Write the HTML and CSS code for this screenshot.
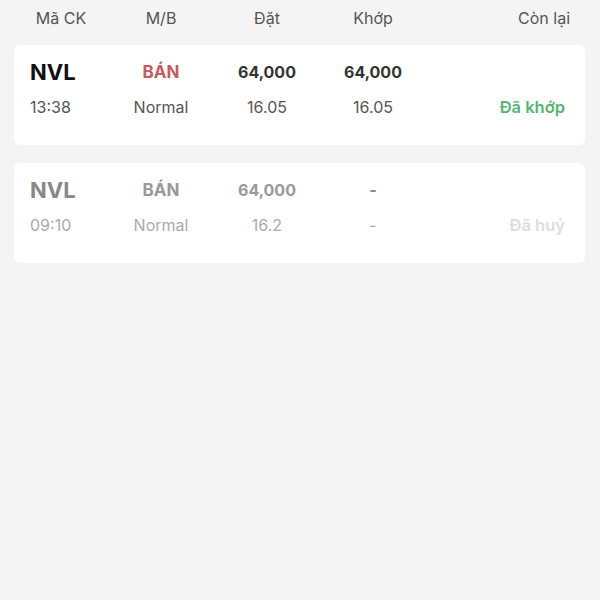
FILE: index.html
```html
<!DOCTYPE html>
<html lang="vi">
<head>
    <meta charset="UTF-8">
    <meta name="viewport" content="width=device-width, initial-scale=1.0">
    <title>Sổ lệnh</title>
    <link rel="stylesheet" href="styles.css">
</head>
<body>

<div class="orders">
    <div class="order-head">
        <span class="col-code">Mã CK</span>
        <span>M/B</span>
        <span>Đặt</span>
        <span>Khớp</span>
        <span class="col-status">Còn lại</span>
    </div>

    <div class="order-card">
        <div class="order-row top">
            <span class="col-code code">NVL</span>
            <span class="side sell">BÁN</span>
            <span class="qty">64,000</span>
            <span class="qty">64,000</span>
            <span class="col-status"></span>
        </div>
        <div class="order-row">
            <span class="col-code">13:38</span>
            <span>Normal</span>
            <span>16.05</span>
            <span>16.05</span>
            <span class="col-status status matched">Đã khớp</span>
        </div>
    </div>

    <div class="order-card cancelled">
        <div class="order-row top">
            <span class="col-code code">NVL</span>
            <span class="side">BÁN</span>
            <span class="qty">64,000</span>
            <span class="dash">-</span>
            <span class="col-status"></span>
        </div>
        <div class="order-row">
            <span class="col-code">09:10</span>
            <span>Normal</span>
            <span>16.2</span>
            <span>-</span>
            <span class="col-status status">Đã huỷ</span>
        </div>
    </div>
</div>

</body>
</html>
```

FILE: styles.css
```css
body {
    font-family: Inter, 'Noto Sans', sans-serif;
    background-color: #f4f4f4;
    color: #444;
    margin: 0;
    padding: 0;
    height: 100vh;
}
.orders {
    padding: 0 15px 0 14px;
}
.order-head,
.order-row {
    display: grid;
    grid-template-columns: 62px 138px 74px 138px 1fr;
    align-items: center;
    text-align: center;
}
.order-head {
    height: 36px;
    padding: 0 15px 0 16px;
    font-size: 16px;
    color: #555;
}
.order-head .col-code {
    text-align: center;
}
.col-code {
    text-align: left;
}
.col-status {
    text-align: right;
}
.order-card {
    background-color: #ffffff;
    border-radius: 6px;
    margin-top: 9px;
    margin-bottom: 18px;
    padding: 14px 20px 27px 16px;
    height: 59px;
}
.order-card + .order-card {
    margin-top: 0;
}
.order-row {
    height: 22px;
    font-size: 16px;
    color: #555;
    white-space: nowrap;
}
.order-row.top {
    margin-bottom: 15px;
}
.code {
    font-size: 22px;
    font-weight: 700;
    color: #111;
}
.side {
    font-size: 17px;
    font-weight: 700;
}
.side.sell {
    color: #c45c60;
}
.qty {
    font-size: 16px;
    font-weight: 700;
    color: #333;
}
.status {
    font-size: 16.5px;
    font-weight: 600;
}
.status.matched {
    color: #55b573;
}

/* Cancelled order: faded */
.cancelled .order-row {
    color: #aaa;
}
.cancelled .code {
    color: #888;
}
.cancelled .side,
.cancelled .qty {
    color: #999;
}
.cancelled .dash {
    color: #888;
    font-weight: 700;
}
.cancelled .status {
    color: #ddd;
}
```
